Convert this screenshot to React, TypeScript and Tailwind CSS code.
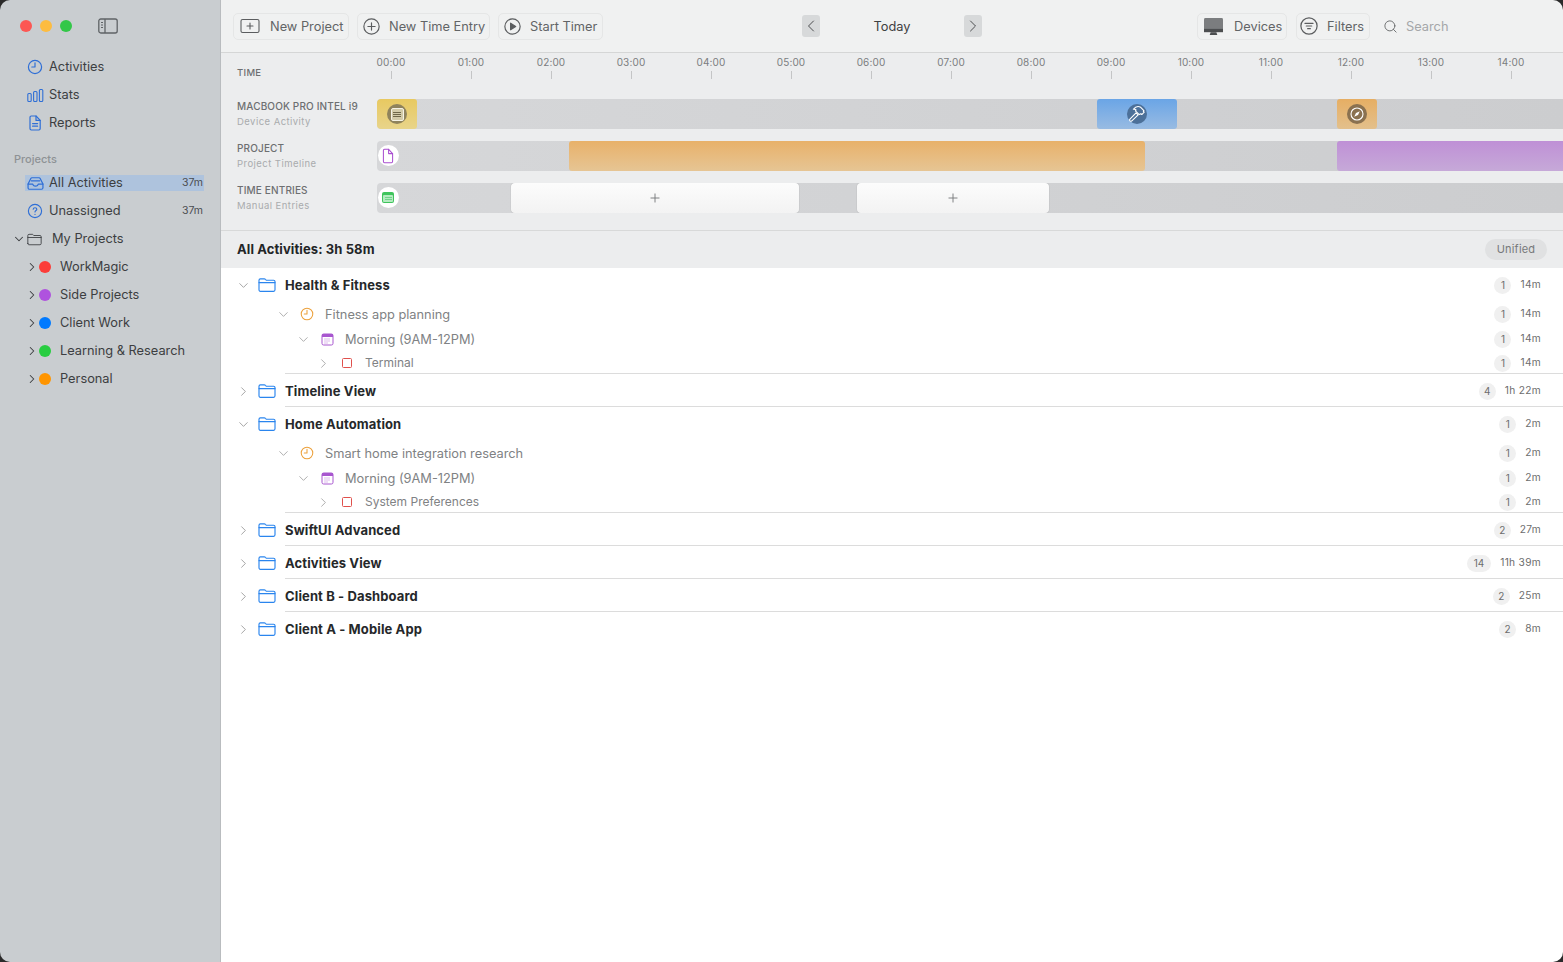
import React from "react";
import { ChevronDown, ChevronRight, ChevronLeft, Search, Plus } from "lucide-react";

const FONT = "font-['Inter','Liberation_Sans',sans-serif]";

function Sv({ size = 16, className = "", sw = 1.3, children, vb = "0 0 16 16" }: { size?: number; className?: string; sw?: number; children: React.ReactNode; vb?: string }) {
  return (
    <svg width={size} height={size} viewBox={vb} fill="none" stroke="currentColor" strokeWidth={sw} strokeLinecap="round" strokeLinejoin="round" className={className}>
      {children}
    </svg>
  );
}

const ClockIcon = ({ className = "", size = 16 }: { className?: string; size?: number }) => (
  <Sv size={size} className={className} sw={1.2}>
    <circle cx="8" cy="8" r="6.6" />
    <path d="M8 3.8V8H4.8" />
  </Sv>
);

const FolderIcon = ({ className = "", size = 18, sw = 1.2 }: { className?: string; size?: number; sw?: number }) => (
  <Sv size={size} className={className} vb="0 0 18 16" sw={sw}>
    <path d="M1 12.8V3.2C1 2.3 1.6 1.8 2.4 1.8H6.2C6.9 1.8 7.2 2 7.6 2.5L8.2 3.2H15.6C16.4 3.2 17 3.8 17 4.6V12.8C17 13.7 16.4 14.3 15.6 14.3H2.4C1.6 14.3 1 13.7 1 12.8Z" />
    <path d="M1 5.6H17" />
  </Sv>
);

const NavRow = ({ icon, label, right, selected }: { icon: React.ReactNode; label: string; right?: string; selected?: boolean }) => (
  <div className="flex h-[28px] items-center">
    <div className={`ml-[25px] mr-[16px] flex h-[16px] flex-1 items-center ${selected ? "bg-[#aec3dd]" : ""}`}>
      <div className="-ml-[1px] flex w-[22px] shrink-0 justify-center text-[#2f6fd6]">{icon}</div>
      <span className="ml-[3px] text-[12.8px] text-[#3c3e41]">{label}</span>
      {right && <span className="ml-auto pr-[1px] text-[10.5px] text-[#4a4c50]">{right}</span>}
    </div>
  </div>
);

const ProjectRow = ({ color, label }: { color: string; label: string }) => (
  <div className="flex h-[28px] items-center pl-[25px]">
    <ChevronRight size={14} strokeWidth={1.8} className="text-[#3c3e41]" />
    <span className={`h-[12px] w-[12px] rounded-full ${color}`} />
    <span className="ml-[9px] text-[12.8px] text-[#3c3e41]">{label}</span>
  </div>
);

function Sidebar() {
  return (
    <aside className="flex w-[221px] shrink-0 flex-col border-r border-r-[#b9bcbf] bg-[#c9cdd0]">
      <div className="flex h-[53px] items-center pl-[20px] pb-[1px]">
        <span className="h-[12px] w-[12px] rounded-full bg-[#fc5753]" />
        <span className="ml-[8px] h-[12px] w-[12px] rounded-full bg-[#fdbc40]" />
        <span className="ml-[8px] h-[12px] w-[12px] rounded-full bg-[#33c748]" />
        <svg width="20" height="16" viewBox="0 0 20 16" fill="none" stroke="#5f6366" strokeWidth="1.3" className="ml-[26px]">
          <rect x="0.8" y="1" width="18.4" height="14" rx="2" />
          <path d="M7 1V15" />
          <path d="M3 4.5H5M3 7H5M3 9.5H5" strokeWidth="1" />
        </svg>
      </div>
      <div className="flex flex-col">
        <NavRow label="Activities" icon={<ClockIcon />} />
        <NavRow
          label="Stats"
          icon={
            <Sv size={17} vb="0 0 17 14" sw={1.1}>
              <rect x="0.8" y="5" width="3.4" height="8" rx="1" />
              <rect x="6.6" y="3" width="3.4" height="10" rx="1" />
              <rect x="12.4" y="1" width="3.4" height="12" rx="1" />
            </Sv>
          }
        />
        <NavRow
          label="Reports"
          icon={
            <Sv size={16} sw={1.2}>
              <path d="M3 2.4C3 1.6 3.5 1 4.3 1H9L13.2 5.4V13.6C13.2 14.4 12.6 15 11.9 15H4.3C3.5 15 3 14.4 3 13.6Z" />
              <path d="M9 1V5.4H13.2M5.6 8.6H10.6M5.6 11.2H10.6" />
            </Sv>
          }
        />
      </div>
      <div className="mt-[13px] h-[18px] pl-[14px] text-[11px] font-medium leading-[18px] text-[#8e9295]">Projects</div>
      <div className="mt-[1px] flex flex-col">
        <NavRow
          selected
          label="All Activities"
          right="37m"
          icon={
            <Sv size={17} sw={1.15}>
              <path d="M1 8.5L3.6 3.2C3.8 2.8 4.1 2.6 4.6 2.6H11.4C11.9 2.6 12.2 2.8 12.4 3.2L15 8.5V12C15 12.8 14.4 13.4 13.6 13.4H2.4C1.6 13.4 1 12.8 1 12Z" />
              <path d="M1 8.5H5.4C5.6 9.8 6.6 10.4 8 10.4C9.4 10.4 10.4 9.8 10.6 8.5H15M4 5.5H12" />
            </Sv>
          }
        />
        <NavRow
          label="Unassigned"
          right="37m"
          icon={
            <Sv size={16} sw={1.15}>
              <circle cx="8" cy="8" r="6.6" />
              <path d="M6.2 6.2C6.3 5.2 7 4.7 8 4.7C9 4.7 9.8 5.3 9.8 6.2C9.8 7.5 8 7.5 8 9M8 11.3V11.4" />
            </Sv>
          }
        />
        <div className="flex h-[28px] items-center pl-[12px]">
          <ChevronDown size={14} strokeWidth={1.8} className="text-[#3c3e41]" />
          <FolderIcon size={15} className="ml-[1px] text-[#3c3e41]" sw={1.05} />
          <span className="ml-[10px] text-[12.8px] text-[#3c3e41]">My Projects</span>
        </div>
        <ProjectRow color="bg-[#fc3d39]" label="WorkMagic" />
        <ProjectRow color="bg-[#af52de]" label="Side Projects" />
        <ProjectRow color="bg-[#007aff]" label="Client Work" />
        <ProjectRow color="bg-[#28cd41]" label="Learning & Research" />
        <ProjectRow color="bg-[#ff9500]" label="Personal" />
      </div>
    </aside>
  );
}

const ToolBtn = ({ icon, label, w, cell, textPt = "pt-[2px]" }: { icon: React.ReactNode; label: string; w: string; cell: string; textPt?: string }) => (
  <div className={`flex h-[27px] items-center rounded-[5px] border border-[#e5e6e6] ${w}`}>
    <div className={`flex shrink-0 justify-center text-[#5b5d5f] ${cell}`}>{icon}</div>
    <span className={`whitespace-nowrap text-[12.8px] text-[#626466] ${textPt}`}>{label}</span>
  </div>
);

function Toolbar() {
  return (
    <div className="flex h-[53px] shrink-0 items-center border-b border-b-[#d5d6d6] bg-[#f0f1f1] pl-[12px]">
      <div className="flex items-center gap-[8px]">
        <ToolBtn
          w="w-[116px]"
          cell="w-[32px] mr-[4px]"
          textPt="pt-[1px]"
          label="New Project"
          icon={
            <Sv size={20} sw={1.1} vb="0 0 20 16">
              <rect x="1" y="1.5" width="18" height="13" rx="1.6" />
              <path d="M10 5V11M7 8H13" />
            </Sv>
          }
        />
        <ToolBtn
          w="w-[133px]"
          cell="w-[27px] mr-[4px]"
          label="New Time Entry"
          icon={
            <Sv size={17} sw={1.1}>
              <circle cx="8" cy="8" r="7.2" />
              <path d="M8 4.6V11.4M4.6 8H11.4" />
            </Sv>
          }
        />
        <ToolBtn
          w="w-[105px]"
          cell="w-[27px] mr-[4px]"
          label="Start Timer"
          icon={
            <svg width="17" height="17" viewBox="0 0 16 16" fill="none" stroke="currentColor" strokeWidth="1.1">
              <circle cx="8" cy="8" r="7.2" />
              <path d="M6.2 4.9L11 8L6.2 11.1Z" fill="currentColor" strokeLinejoin="round" />
            </svg>
          }
        />
      </div>
      <div className="ml-[199px] flex w-[180px] items-center justify-between">
        <div className="flex h-[22px] w-[18px] items-center justify-center rounded-[3px] bg-[#d7d9da] text-[#3f4143]">
          <ChevronLeft size={20} strokeWidth={1.1} className="shrink-0" />
        </div>
        <span className="pt-[2px] text-[12.8px] text-[#3e4042]">Today</span>
        <div className="flex h-[22px] w-[18px] items-center justify-center rounded-[3px] bg-[#d7d9da] text-[#3f4143]">
          <ChevronRight size={20} strokeWidth={1.1} className="shrink-0" />
        </div>
      </div>
      <div className="ml-[215px] flex items-center">
        <div className="flex h-[27px] w-[90px] items-center rounded-[5px] border border-[#e5e6e6]">
          <svg width="21" height="19" viewBox="0 0 22 20" className="ml-[5px]">
            <rect x="1" y="1" width="20" height="14" rx="1.5" fill="#7b7d7f" />
            <rect x="1" y="12.5" width="20" height="3.5" fill="#4c4e50" />
            <path d="M8 16H14L15 19H7Z" fill="#4c4e50" />
          </svg>
          <span className="ml-[10px] pt-[2px] text-[12.8px] text-[#626466]">Devices</span>
        </div>
        <div className="ml-[9px] flex h-[27px] w-[74px] items-center rounded-[5px] border border-[#e5e6e6]">
          <Sv size={18} sw={1.1} className="ml-[3px] text-[#5b5d5f]">
            <circle cx="8" cy="8" r="7.2" />
            <path d="M4.4 5.6H11.6M5.6 8H10.4M6.8 10.4H9.2" />
          </Sv>
          <span className="ml-[9px] pt-[2px] text-[12.8px] text-[#626466]">Filters</span>
        </div>
        <Search size={15} strokeWidth={1.4} className="ml-[13px] text-[#606264]" />
        <span className="ml-[8px] pt-[2px] text-[12.8px] text-[#a5a7a9]">Search</span>
      </div>
    </div>
  );
}

const HOURS = ["00:00", "01:00", "02:00", "03:00", "04:00", "05:00", "06:00", "07:00", "08:00", "09:00", "10:00", "11:00", "12:00", "13:00", "14:00"];

const Label = ({ title, sub }: { title: string; sub: string }) => (
  <div className="flex h-[30px] w-[140px] shrink-0 flex-col whitespace-nowrap">
    <span className="text-[10px] font-medium leading-[14px] tracking-[0.15px] text-[#6d6f71]">{title}</span>
    <span className="mt-[2px] text-[9.5px] leading-[14px] tracking-[0.45px] text-[#a9abad]">{sub}</span>
  </div>
);

const Track = ({ children }: { children: React.ReactNode }) => (
  <div className="relative h-[30px] flex-1 overflow-hidden rounded-l-[4px] bg-gradient-to-r from-[#d6d7d9] to-[#cccdcf]">{children}</div>
);

const Seg = ({ style, cls, children }: { style: React.CSSProperties; cls: string; children?: React.ReactNode }) => (
  <div style={style} className={`absolute top-0 bottom-0 flex items-center justify-center rounded-[3px] ${cls}`}>
    {children}
  </div>
);

const SegIcon = ({ cls, children }: { cls: string; children: React.ReactNode }) => (
  <div className={`flex h-[20px] w-[20px] items-center justify-center rounded-full ${cls}`}>{children}</div>
);

const Entry = ({ left, w }: { left: number; w: number }) => (
  <div
    style={{ left, width: w }}
    className="absolute top-0 bottom-0 flex items-center justify-center rounded-[4px] bg-gradient-to-b from-[#fcfcfc] to-[#f3f3f3] shadow-[0_0_1px_rgba(0,0,0,0.35)]"
  >
    <Plus size={14} strokeWidth={1.6} className="text-[#77797b]" />
  </div>
);

function Timeline() {
  return (
    <div className="flex h-[178px] shrink-0 flex-col border-b border-b-[#d8d9d9] bg-[#ecedee]">
      <div className="flex h-[46px] shrink-0 overflow-hidden pl-[16px]">
        <div className="w-[140px] shrink-0 pt-[13px] text-[9.5px] font-medium leading-[14px] tracking-[0.3px] text-[#6d6f71]">TIME</div>
        {HOURS.map((h) => (
          <div key={h} className="w-[80px] shrink-0 pt-[3px]">
            <div className="flex w-[28px] flex-col items-center">
              <span className="text-[10px] leading-[12px] tracking-[0.15px] text-[#7b7d7f]">{h}</span>
              <span className="mt-[3px] h-[8px] w-px bg-[#c4c5c6]" />
            </div>
          </div>
        ))}
      </div>
      <div className="flex flex-col gap-[12px]">
        <div className="flex items-center pl-[16px]">
          <Label title="MACBOOK PRO INTEL i9" sub="Device Activity" />
          <Track>
            <Seg style={{ left: 0, width: 40 }} cls="bg-gradient-to-b from-[#e8c960] to-[#e8d48a]">
              <SegIcon cls="bg-[#8f835c]">
                <div className="flex h-[13px] w-[13px] flex-col items-center justify-center gap-[1px] rounded-[2px] border border-[#f5f2e4] bg-[#d3cba8]">
                  <span className="h-px w-[8px] bg-[#6f6748]" />
                  <span className="h-px w-[8px] bg-[#6f6748]" />
                  <span className="h-px w-[8px] bg-[#6f6748]" />
                </div>
              </SegIcon>
            </Seg>
            <Seg style={{ left: 720, width: 80 }} cls="bg-gradient-to-b from-[#6aa5e6] to-[#98bbe2]">
              <SegIcon cls="bg-[#4c7099]">
                <svg width="18" height="18" viewBox="0 0 17 17" fill="none" stroke="#fff" strokeWidth="1.05" strokeLinejoin="round">
                  <path d="M1.6 13.6L7.6 7.4L9.6 9.4L3.4 15.2C2.4 15.8 1 14.6 1.6 13.6Z" />
                  <path d="M5 4C7 1.6 10 1 12 2.2L15 5.4L14.5 6L15.3 6.8L13 9L12.2 8.2L10.6 9L7 5.6L7.6 4.6C6.8 4 5.8 3.8 5 4Z" />
                </svg>
              </SegIcon>
            </Seg>
            <Seg style={{ left: 960, width: 40 }} cls="bg-gradient-to-b from-[#e6ae63] to-[#e3c08c]">
              <SegIcon cls="bg-[#8a7150]">
                <svg width="14" height="14" viewBox="0 0 14 14" fill="none" stroke="#fff" strokeWidth="1.1">
                  <circle cx="7" cy="7" r="6" />
                  <path d="M9.8 4.2L8 8L4.2 9.8L6 6Z" fill="#fff" stroke="none" />
                </svg>
              </SegIcon>
            </Seg>
          </Track>
        </div>
        <div className="flex items-center pl-[16px]">
          <Label title="PROJECT" sub="Project Timeline" />
          <Track>
            <div className="absolute left-[1px] top-[4px] flex h-[21px] w-[21px] items-center justify-center rounded-full bg-white">
              <Sv size={16} sw={1.05} className="mr-[2px] text-[#a94fd0]">
                <path d="M3.4 2.6C3.4 1.8 3.9 1.3 4.6 1.3H8.6L12.6 5.6V13.2C12.6 14 12.1 14.7 11.4 14.7H4.6C3.9 14.7 3.4 14 3.4 13.2Z" />
                <path d="M8.6 1.3V5.6H12.6" />
              </Sv>
            </div>
            <Seg style={{ left: 192, width: 576 }} cls="bg-gradient-to-b from-[#e8b169] to-[#e6c594]" />
            <Seg style={{ left: 960, width: 300 }} cls="bg-gradient-to-b from-[#bf90d6] to-[#c6a9d8]" />
          </Track>
        </div>
        <div className="flex items-center pl-[16px]">
          <Label title="TIME ENTRIES" sub="Manual Entries" />
          <Track>
            <div className="absolute left-[1px] top-[4px] flex h-[21px] w-[21px] items-center justify-center rounded-full bg-white">
              <div className="mr-[1px] flex h-[11px] w-[12px] flex-col overflow-hidden rounded-[2px] bg-[#3fc45c] p-[1px] pt-[3px]">
                <span className="flex h-full flex-col items-center justify-center gap-px rounded-[1px] bg-[#b4ebc0]">
                  <span className="h-px w-[7px] bg-[#6fd489]" />
                  <span className="h-px w-[7px] bg-[#6fd489]" />
                </span>
              </div>
            </div>
            <Entry left={134} w={288} />
            <Entry left={480} w={192} />
          </Track>
        </div>
      </div>
    </div>
  );
}

const Meta = ({ n, t }: { n: string; t: string }) => (
  <div className="ml-auto flex items-center pr-[22px]">
    <span className={`flex h-[17px] min-w-[17px] items-center justify-center rounded-full bg-[#f0f0f0] text-[10px] text-[#6d6d6d] ${n.length > 1 ? "px-[7px]" : ""}`}>{n}</span>
    <span className="ml-[9px] whitespace-nowrap text-[10.2px] tracking-[0.3px] text-[#6d6d6d]">{t}</span>
  </div>
);

const Top = ({ open, name, n, t }: { open?: boolean; name: string; n: string; t: string }) => (
  <div className="flex h-[34px] items-start pl-[16px] pt-[8px]">
    <div className="flex h-[18px] w-full items-center">
      <div className="flex w-[12px] shrink-0 justify-center text-[#7e7e7e]">
        {open ? <ChevronDown size={15} strokeWidth={1.1} className="shrink-0" /> : <ChevronRight size={15} strokeWidth={1.1} className="shrink-0" />}
      </div>
      <FolderIcon size={18} className="ml-[9px] text-[#2a85ee]" sw={1.15} />
      <span className="ml-[9px] pt-[2px] text-[13px] font-bold tracking-[0.12px] text-[#26282a]">{name}</span>
      <Meta n={n} t={t} />
    </div>
  </div>
);

const Sub = ({ pl, h, mt, icon, name, n, t, open, textCls }: { pl: string; h: string; mt?: string; icon: React.ReactNode; name: string; n: string; t: string; open?: boolean; textCls: string }) => (
  <div className={`flex items-center ${pl} ${h} ${mt ?? ""}`}>
    <div className="flex w-[12px] shrink-0 justify-center text-[#8a8a8a]">
      {open ? <ChevronDown size={15} strokeWidth={1.1} className="shrink-0" /> : <ChevronRight size={15} strokeWidth={1.1} className="shrink-0" />}
    </div>
    <div className="ml-[11px] flex w-[14px] shrink-0 justify-center">{icon}</div>
    <span className={`ml-[11px] ${textCls}`}>{name}</span>
    <Meta n={n} t={t} />
  </div>
);

const CalIcon = () => (
  <svg width="13" height="13" viewBox="0 0 13 13" fill="none">
    <rect x="1" y="1" width="11" height="11" rx="1.6" stroke="#a856cf" strokeWidth="1" />
    <rect x="1" y="1" width="11" height="3" fill="#a856cf" />
    <path d="M3.5 6H9.5M3.5 8H9.5M3.5 10H7.5" stroke="#a856cf" strokeWidth="0.8" strokeDasharray="1 1" />
  </svg>
);

const Divider = () => <div className="ml-[64px] h-px bg-[#dcdcdc]" />;

const Expanded = ({ name, task, app, t }: { name: string; task: string; app: string; t: string }) => (
  <>
    <Top open name={name} n="1" t={t} />
    <Sub pl="pl-[56px]" h="h-[24px]" open icon={<ClockIcon size={14} className="text-[#eca13c]" />} name={task} n="1" t={t} textCls="pt-[2px] text-[12.8px] text-[#808284]" />
    <Sub pl="pl-[76px]" h="h-[24px]" mt="mt-px" open icon={<CalIcon />} name="Morning (9AM-12PM)" n="1" t={t} textCls="pt-[2px] text-[12.8px] text-[#808284]" />
    <Sub pl="pl-[96px]" h="h-[20px]" mt="mt-[2px]" icon={<span className="h-[10px] w-[10px] rounded-[1.5px] border border-[#e0504c]" />} name={app} n="1" t={t} textCls="text-[12px] text-[#808284]" />
    <Divider />
  </>
);

const Collapsed = ({ name, n, t, last }: { name: string; n: string; t: string; last?: boolean }) => (
  <>
    <div className="-mb-[2px]">
      <Top name={name} n={n} t={t} />
    </div>
    {!last && <Divider />}
  </>
);

function Detail() {
  return (
    <div className="flex flex-1 flex-col bg-white">
      <div className="flex h-[37px] shrink-0 items-center bg-[#ecedee] pl-[16px] pr-[16px]">
        <span className="text-[13px] font-bold tracking-[0.1px] text-[#232527]">All Activities: 3h 58m</span>
        <span className="ml-auto flex h-[21px] w-[62px] items-center justify-center rounded-full bg-[#e0e1e2] text-[11px] tracking-[0.2px] text-[#77797b]">Unified</span>
      </div>
      <div className="flex flex-col">
        <Expanded name="Health & Fitness" task="Fitness app planning" app="Terminal" t="14m" />
        <Collapsed name="Timeline View" n="4" t="1h 22m" />
        <Expanded name="Home Automation" task="Smart home integration research" app="System Preferences" t="2m" />
        <Collapsed name="SwiftUI Advanced" n="2" t="27m" />
        <Collapsed name="Activities View" n="14" t="11h 39m" />
        <Collapsed name="Client B - Dashboard" n="2" t="25m" />
        <Collapsed name="Client A - Mobile App" n="2" t="8m" last />
      </div>
    </div>
  );
}

export default function App() {
  return (
    <div className={`h-[962px] w-[1563px] overflow-hidden bg-[#2a2a2a] ${FONT}`}>
      <div className="flex h-full w-full overflow-hidden rounded-[10px]">
        <Sidebar />
        <main className="flex min-w-0 flex-1 flex-col">
          <Toolbar />
          <Timeline />
          <Detail />
        </main>
      </div>
    </div>
  );
}
